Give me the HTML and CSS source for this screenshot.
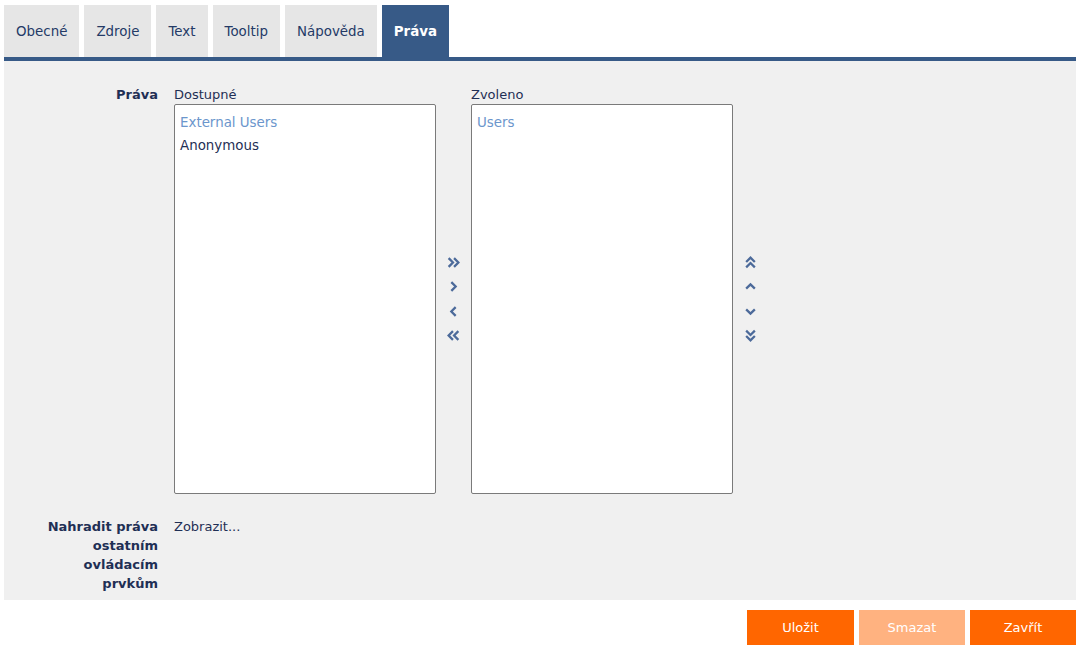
FILE: index.html
```html
<!DOCTYPE html>
<html lang="cs">
<head>
<meta charset="utf-8">
<title>Práva</title>
<link rel="stylesheet" href="styles.css">
</head>
<body>
<div class="page">
  <div class="tabs">
    <div class="tab">Obecné</div>
    <div class="tab">Zdroje</div>
    <div class="tab">Text</div>
    <div class="tab">Tooltip</div>
    <div class="tab">Nápověda</div>
    <div class="tab active">Práva</div>
  </div>
  <div class="tabline"></div>
  <div class="panel">
    <div class="row">
      <div class="label">Práva</div>
      <div class="field picker">
        <div class="list-col">
          <div class="list-title">Dostupné</div>
          <div class="listbox">
            <div class="item sel">External Users</div>
            <div class="item">Anonymous</div>
          </div>
        </div>
        <div class="arrows">
          <svg class="ic" viewBox="0 0 12 12"><polyline points="1.5,2 5.5,6 1.5,10"/><polyline points="6.5,2 10.5,6 6.5,10"/></svg>
          <svg class="ic" viewBox="0 0 12 12"><polyline points="4,2 8,6 4,10"/></svg>
          <svg class="ic" viewBox="0 0 12 12"><polyline points="8,2 4,6 8,10"/></svg>
          <svg class="ic" viewBox="0 0 12 12"><polyline points="5.5,2 1.5,6 5.5,10"/><polyline points="10.5,2 6.5,6 10.5,10"/></svg>
        </div>
        <div class="list-col">
          <div class="list-title">Zvoleno</div>
          <div class="listbox">
            <div class="item sel">Users</div>
          </div>
        </div>
        <div class="arrows">
          <svg class="ic" viewBox="0 0 12 12"><polyline points="2,5.5 6,1.5 10,5.5"/><polyline points="2,10.5 6,6.5 10,10.5"/></svg>
          <svg class="ic" viewBox="0 0 12 12"><polyline points="2,8 6,4 10,8"/></svg>
          <svg class="ic" viewBox="0 0 12 12"><polyline points="2,4 6,8 10,4"/></svg>
          <svg class="ic" viewBox="0 0 12 12"><polyline points="2,1.5 6,5.5 10,1.5"/><polyline points="2,6.5 6,10.5 10,6.5"/></svg>
        </div>
      </div>
    </div>
    <div class="row row2">
      <div class="label">Nahradit práva ostatním ovládacím prvkům</div>
      <div class="field">Zobrazit...</div>
    </div>
  </div>
  <div class="buttons">
    <button class="btn">Uložit</button>
    <button class="btn disabled">Smazat</button>
    <button class="btn">Zavřít</button>
  </div>
</div>
</body>
</html>
```
FILE: styles.css
```css
* { box-sizing: border-box; }
html, body { margin: 0; padding: 0; background: #ffffff; }
body {
  font-family: "DejaVu Sans", Verdana, sans-serif;
  font-size: 13px;
  color: #1f2f55;
}
.page { padding: 5px 5px 0 4px; }
.tabs { display: flex; gap: 5px; height: 52px; }
.tab {
  background: #e6e6e6;
  color: #243a66;
  padding: 0 12px;
  display: flex;
  align-items: center;
  font-size: 13.4px;
}
.tab.active { background: #375a87; color: #ffffff; font-weight: bold; }
.tabline { height: 4px; background: #375a87; }
.panel {
  background: #f0f0f0;
  padding: 24px 0 7px 0;
}
.row { display: grid; grid-template-columns: 154px 1fr; column-gap: 16px; }
.label {
  text-align: right;
  font-weight: bold;
  padding-left: 30px;
  line-height: 19px;
  color: #1f2f55;
  font-size: 13px;
}
.field { line-height: 19px; }
.picker { display: flex; align-items: stretch; }
.list-col { display: flex; flex-direction: column; width: 262px; }
.list-title { line-height: 19px; height: 19px; }
.listbox {
  background: #fff;
  border: 1px solid #7a7a7a;
  border-radius: 2px;
  height: 390px;
  padding: 6px 5px;
}
.item { line-height: 24px; height: 23px; color: #1f2f55; font-size: 13.4px; }
.item.sel { color: #6b96cc; }
.arrows {
  width: 35px;
  padding-top: 19px;
  display: flex;
  flex-direction: column;
  justify-content: center;
  align-items: center;
  gap: 11.6px;
}
.ic {
  width: 13px;
  height: 13px;
  fill: none;
  stroke: #4c6a9a;
  stroke-width: 2.1;
}
.row2 { margin-top: 23px; }
.buttons {
  display: flex;
  justify-content: flex-end;
  gap: 5px;
  padding-top: 10px;
}
.btn {
  width: 106px;
  height: 35px;
  border: 0;
  background: #ff6600;
  color: #ffffff;
  font-family: "DejaVu Sans", Verdana, sans-serif;
  font-size: 13px;
  padding: 0;
}
.btn:first-child { width: 107px; }
.btn.disabled { background: #ffb280; }
```
